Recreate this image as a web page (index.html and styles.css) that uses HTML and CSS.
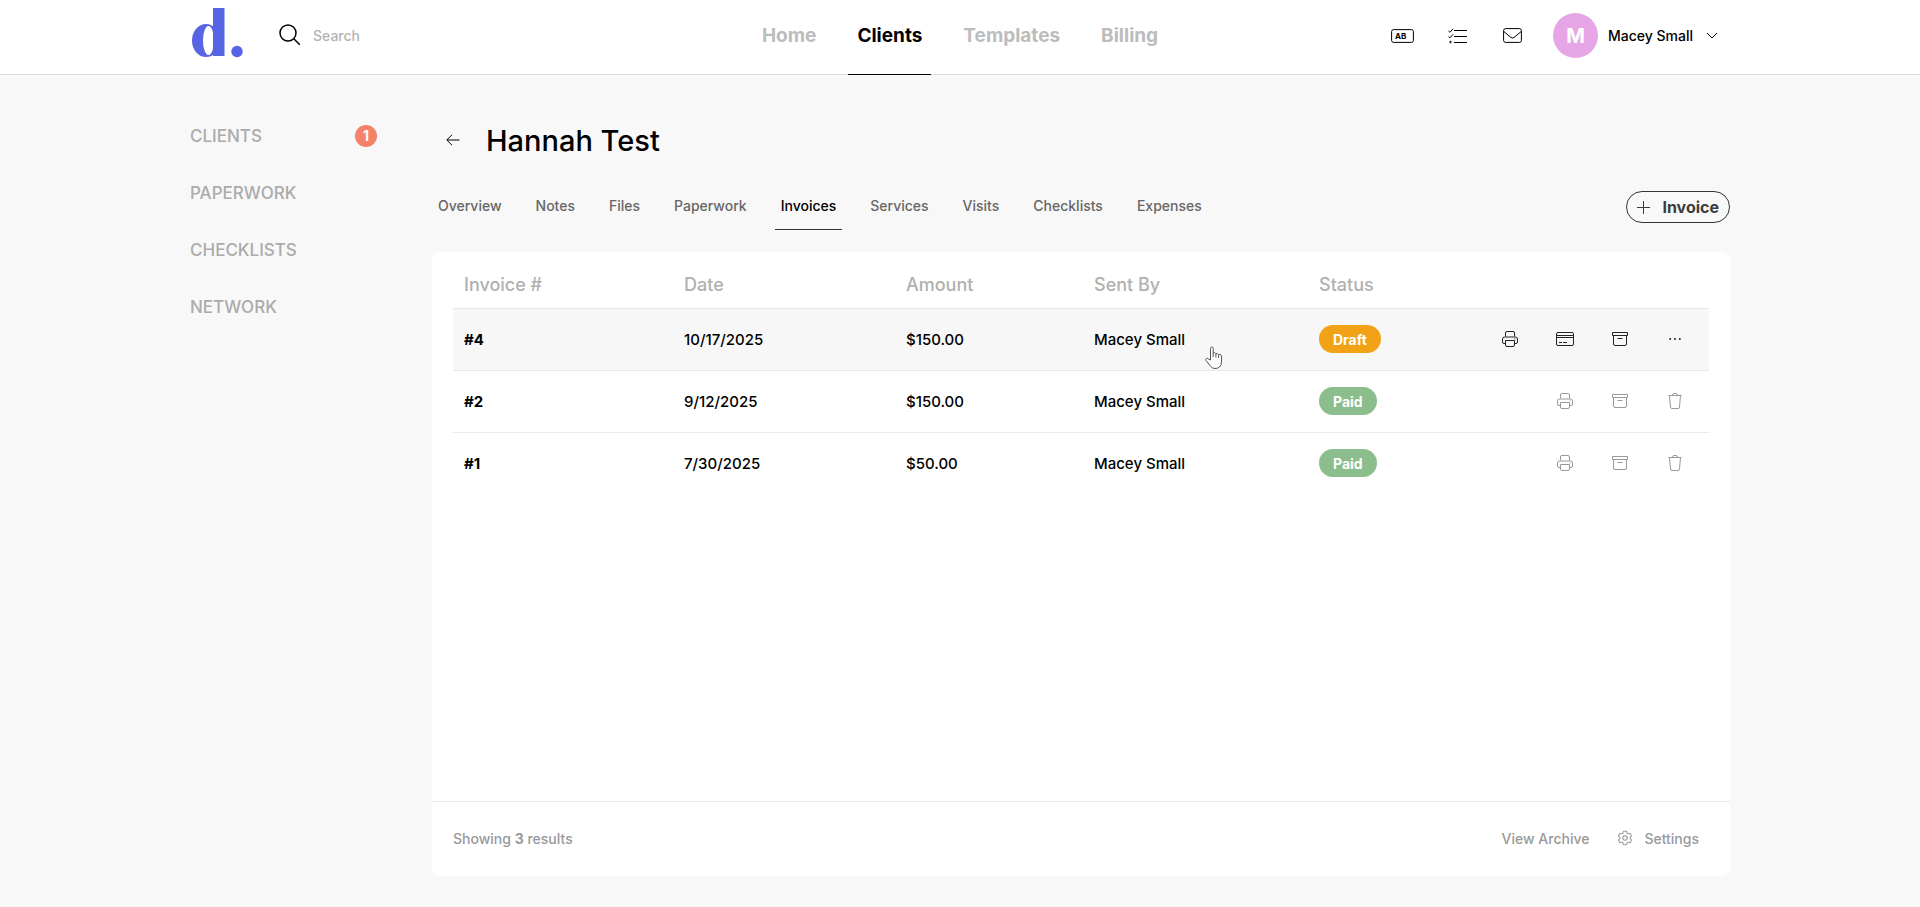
FILE: index.html
```html
<!DOCTYPE html>
<html lang="en">
<head>
    <meta charset="UTF-8">
    <meta name="viewport" content="width=device-width, initial-scale=1.0">
    <title>Hannah Test - Invoices</title>
    <link rel="stylesheet" href="styles.css">
</head>
<body>
    <!-- shared icons -->
    <svg class="sprite" aria-hidden="true">
        <symbol id="printer" viewBox="0 0 16 16">
            <path d="M3.5 5.5V2a1.5 1.5 0 0 1 1.5-1.5h6A1.5 1.5 0 0 1 12.5 2v3.5"/>
            <path d="M3.5 12.5H2A1.5 1.5 0 0 1 .5 11V8A2 2 0 0 1 2.5 6h11a2 2 0 0 1 2 2v3a1.5 1.5 0 0 1-1.5 1.5h-1.5"/>
            <path d="M3.5 9.5h9V14a1.5 1.5 0 0 1-1.5 1.5H5A1.5 1.5 0 0 1 3.5 14zM12.5 8h1"/>
        </symbol>
        <symbol id="archive" viewBox="0 0 16 16">
            <path d="M.5 1.5h15v3H.5zM1.5 4.5V13A1.5 1.5 0 0 0 3 14.5h10a1.5 1.5 0 0 0 1.5-1.5V4.5M5.5 7.5h5"/>
        </symbol>
        <symbol id="trash" viewBox="0 0 14 16">
            <path d="M.5 2.500h13M4.500 2.500Q4.500.5 6 .5h2q1.500 0 1.500 2M1.500 2.500l1 11.500A1.500 1.500 0 0 0 4 15.500h6a1.500 1.500 0 0 0 1.500-1.500l1-11.500"/>
        </symbol>
    </svg>

    <header class="topbar">
        <div class="topbar-inner">
            <div class="topbar-left">
                <a href="#" class="logo" aria-label="Home page">
                    <svg width="52" height="50" viewBox="0 0 52 50">
                        <ellipse class="logo-fill" cx="15" cy="32.5" rx="14" ry="16.5"/>
                        <ellipse class="logo-hole" cx="17.5" cy="32.5" rx="5.5" ry="14.5"/>
                        <rect class="logo-fill" x="22" y="0" width="11.5" height="48"/>
                        <circle class="logo-fill" cx="46" cy="43.5" r="5.7"/>
                    </svg>
                </a>
                <label class="search">
                    <svg class="icon" width="22" height="22" viewBox="0 0 22 22" stroke-width="1.5"><circle cx="9" cy="9" r="8"/><path d="M14.8 14.8l6 6"/></svg>
                    <input type="search" placeholder="Search" aria-label="Search">
                </label>
            </div>
            <nav class="main-nav">
                <a href="#">Home</a>
                <a href="#" class="active">Clients</a>
                <a href="#">Templates</a>
                <a href="#">Billing</a>
            </nav>
            <div class="topbar-right">
                <button class="icon-btn" aria-label="Text snippets">
                    <svg class="icon" width="23" height="14" viewBox="0 0 23 14"><rect x=".6" y=".6" width="21.8" height="12.8" rx="2"/><text x="4" y="10">AB</text></svg>
                </button>
                <button class="icon-btn" aria-label="Tasks">
                    <svg class="icon" width="19" height="16" viewBox="0 0 19 16"><path d="M6 2.5h13M6 8.5h13M6 14.500h13M.5 3l1.500 1.300L5 .8M.5 8.500L2 9.800l3-3.500"/><circle cx="2.5" cy="14" r=".8"/></svg>
                </button>
                <button class="icon-btn" aria-label="Messages">
                    <svg class="icon" width="19" height="15" viewBox="0 0 19 15"><rect x=".6" y=".6" width="17.8" height="13.8" rx="2"/><path d="M.8 3.5l7.2 6q1.5 1 3 0l7.200-6"/></svg>
                </button>
                <button class="user">
                    <span class="avatar">M</span>
                    <span>Macey Small</span>
                    <svg class="icon" width="12" height="8" viewBox="0 0 12 8"><path d="M1 1l5 5 5-5"/></svg>
                </button>
            </div>
        </div>
    </header>

    <div class="page">
        <nav class="sidebar">
            <a href="#">CLIENTS <span class="badge">1</span></a>
            <a href="#">PAPERWORK</a>
            <a href="#">CHECKLISTS</a>
            <a href="#">NETWORK</a>
        </nav>

        <main class="content">
            <div class="title">
                <a href="#" class="back" aria-label="Back">
                    <svg class="icon" width="14" height="12" viewBox="0 0 14 12"><path d="M13.5 6H1M6 .8L.8 6 6 11.2"/></svg>
                </a>
                <h1>Hannah Test</h1>
            </div>
            <div class="tab-row">
                <nav class="tabs">
                    <a href="#">Overview</a>
                    <a href="#">Notes</a>
                    <a href="#">Files</a>
                    <a href="#">Paperwork</a>
                    <a href="#" class="active">Invoices</a>
                    <a href="#">Services</a>
                    <a href="#">Visits</a>
                    <a href="#">Checklists</a>
                    <a href="#">Expenses</a>
                </nav>
                <button class="add-btn">
                    <svg class="icon" width="13" height="13" viewBox="0 0 13 13"><path d="M6.5 0v13M0 6.5h13"/></svg>
                    Invoice
                </button>
            </div>

            <section class="card">
                <table class="invoices">
                    <thead>
                        <tr>
                            <th class="col-number">Invoice #</th>
                            <th class="col-date">Date</th>
                            <th class="col-amount">Amount</th>
                            <th class="col-sender">Sent By</th>
                            <th class="col-status">Status</th>
                            <th aria-label="Actions"></th>
                        </tr>
                    </thead>
                    <tbody>
                        <tr class="hovered">
                            <td class="number">#4</td>
                            <td>10/17/2025</td>
                            <td>$150.00</td>
                            <td class="sender">Macey Small
                                <svg class="pointer" width="18" height="24" viewBox="0 0 18 24"><path d="M5.5 14V2.5q0-1.500 1.300-1.500t1.400 1.500V7q2-1 2.600.7 2-.8 2.700.8 2.700-.7 3 1.700v5q0 4-2 5.800-1.500 1.500-4.500 1.500-3 0-4.600-2.500L1 14.500q-.7-1.700.7-2.200 1.200-.3 2.100.9zM8.200 7v4M10.900 8v3.500M13.600 9v3"/></svg>
                            </td>
                            <td><span class="pill draft">Draft</span></td>
                            <td>
                                <div class="actions">
                                    <button aria-label="Print"><svg class="icon" width="16" height="16"><use href="#printer"/></svg></button>
                                    <button aria-label="Payment"><svg class="icon" width="18" height="14" viewBox="0 0 18 14"><rect x=".5" y=".5" width="17" height="13" rx="1.5"/><path d="M.5 3.5h17M.5 5.5h17M3 10.500h3M7 10.500h4"/></svg></button>
                                    <button aria-label="Archive"><svg class="icon" width="16" height="16"><use href="#archive"/></svg></button>
                                    <button aria-label="More"><svg class="dots" width="12" height="4" viewBox="0 0 12 4"><circle cx="1.2" cy="2" r="1"/><circle cx="6" cy="2" r="1"/><circle cx="10.8" cy="2" r="1"/></svg></button>
                                </div>
                            </td>
                        </tr>
                        <tr>
                            <td class="number">#2</td>
                            <td>9/12/2025</td>
                            <td>$150.00</td>
                            <td>Macey Small</td>
                            <td><span class="pill paid">Paid</span></td>
                            <td>
                                <div class="actions">
                                    <button aria-label="Print"><svg class="icon" width="16" height="16"><use href="#printer"/></svg></button>
                                    <button aria-label="Archive"><svg class="icon" width="16" height="16"><use href="#archive"/></svg></button>
                                    <button aria-label="Delete"><svg class="icon" width="14" height="16"><use href="#trash"/></svg></button>
                                </div>
                            </td>
                        </tr>
                        <tr>
                            <td class="number">#1</td>
                            <td>7/30/2025</td>
                            <td>$50.00</td>
                            <td>Macey Small</td>
                            <td><span class="pill paid">Paid</span></td>
                            <td>
                                <div class="actions">
                                    <button aria-label="Print"><svg class="icon" width="16" height="16"><use href="#printer"/></svg></button>
                                    <button aria-label="Archive"><svg class="icon" width="16" height="16"><use href="#archive"/></svg></button>
                                    <button aria-label="Delete"><svg class="icon" width="14" height="16"><use href="#trash"/></svg></button>
                                </div>
                            </td>
                        </tr>
                    </tbody>
                </table>
                <footer class="card-footer">
                    <span>Showing <b>3</b> results</span>
                    <div class="footer-links">
                        <a href="#">View Archive</a>
                        <a href="#">
                            <svg class="icon" width="18" height="18" viewBox="0 0 24 24" stroke-width="1.4"><path d="M9.594 3.94c.09-.542.56-.94 1.11-.94h2.593c.55 0 1.02.398 1.11.94l.213 1.281c.063.374.313.686.645.87.074.04.147.083.22.127.325.196.72.257 1.075.124l1.217-.456a1.125 1.125 0 0 1 1.37.49l1.296 2.247a1.125 1.125 0 0 1-.26 1.431l-1.003.827c-.293.241-.438.613-.43.992a7.723 7.723 0 0 1 0 .255c-.008.378.137.75.43.991l1.004.827c.424.35.534.955.26 1.43l-1.298 2.247a1.125 1.125 0 0 1-1.369.491l-1.217-.456c-.355-.133-.75-.072-1.076.124a6.47 6.47 0 0 1-.22.128c-.331.183-.581.495-.644.869l-.213 1.281c-.09.543-.56.94-1.11.94h-2.594c-.55 0-1.019-.398-1.11-.94l-.213-1.281c-.062-.374-.312-.686-.644-.87a6.52 6.52 0 0 1-.22-.127c-.325-.196-.72-.257-1.076-.124l-1.217.456a1.125 1.125 0 0 1-1.369-.49l-1.297-2.247a1.125 1.125 0 0 1 .26-1.431l1.004-.827c.292-.24.437-.613.43-.991a6.932 6.932 0 0 1 0-.255c.007-.38-.138-.751-.43-.992l-1.004-.827a1.125 1.125 0 0 1-.26-1.43l1.297-2.247a1.125 1.125 0 0 1 1.37-.491l1.216.456c.356.133.751.072 1.076-.124.072-.044.146-.086.22-.128.332-.183.582-.495.644-.869l.214-1.28Z"/><circle cx="12" cy="12" r="3"/></svg>
                            Settings
                        </a>
                    </div>
                </footer>
            </section>
        </main>
    </div>
</body>
</html>
```
FILE: styles.css
```css
*{
    box-sizing: border-box;
}
body{
    margin: 0;
    min-height: 100vh;
    display: flex;
    flex-direction: column;
    background-color: #f8f8f8;
    color: #000;
    font-family: Inter, "Liberation Sans", sans-serif;
    font-size: 14px;
    font-weight: 500;
}
a{
    color: inherit;
    text-decoration: none;
}
button{
    padding: 0;
    border: 0;
    background: none;
    color: inherit;
    font: inherit;
    cursor: pointer;
}
svg{
    display: block;
    flex-shrink: 0;
}
.sprite{
    display: none;
}
.icon{
    fill: none;
    stroke: currentColor;
}
.topbar{
    padding: 0 190px;
    background-color: #fff;
    border-bottom: 1px solid #dcdcdc;
}
.topbar-inner{
    height: 74px;
    display: grid;
    grid-template-columns: 1fr auto 1fr;
}
.topbar-left, .topbar-right{
    display: flex;
    align-items: center;
}
.topbar-left{
    gap: 36px;
    padding-bottom: 9px;
}
.topbar-right{
    justify-content: flex-end;
    padding-right: 12px;
    padding-bottom: 4px;
}
.logo{
    margin-left: 1px;
}
.logo-fill{
    fill: #5764e3;
}
.logo-hole{
    fill: #fff;
}
.search{
    display: flex;
    align-items: center;
    gap: 12px;
    padding-top: 4px;
}
.search input{
    width: 160px;
    padding: 0;
    border: 0;
    outline: none;
    background: none;
    font: inherit;
}
.search input::placeholder{
    color: #b4b4b4;
}
.main-nav{
    display: flex;
    gap: 23px;
    font-size: 19px;
    font-weight: 700;
    color: #bcbcbc;
}
.main-nav a{
    height: 75px;
    padding: 0 9px 4px;
    display: flex;
    align-items: center;
    border-bottom: 1px solid transparent;
}
.main-nav .active{
    color: #000;
    border-color: #000;
}
.icon-btn{
    width: 55px;
    height: 32px;
    display: flex;
    align-items: center;
    justify-content: center;
}
.icon-btn text{
    fill: currentColor;
    stroke: none;
    font-size: 8px;
    font-weight: 700;
}
.user{
    margin-left: 13px;
    display: flex;
    align-items: center;
    gap: 10px;
}
.user .icon{
    margin-left: 3px;
}
.avatar{
    width: 45px;
    height: 45px;
    border-radius: 50%;
    display: flex;
    align-items: center;
    justify-content: center;
    background-color: #e6a6e6;
    color: #fff;
    font-size: 20px;
    font-weight: 700;
}
.page{
    flex: 1;
    display: grid;
    grid-template-columns: 187px 1fr;
    gap: 55px;
    padding: 42px 190px 31px;
}
.sidebar{
    display: flex;
    flex-direction: column;
    gap: 20px;
    font-size: 17px;
    color: #ababab;
}
.sidebar a{
    height: 37px;
    display: flex;
    align-items: center;
    justify-content: space-between;
}
.badge{
    width: 22px;
    height: 22px;
    border-radius: 50%;
    display: flex;
    align-items: center;
    justify-content: center;
    background-color: #f3836b;
    color: #fff;
    font-size: 14px;
    font-weight: 700;
}
.content{
    display: flex;
    flex-direction: column;
}
.title{
    height: 46px;
    padding-left: 14px;
    display: flex;
    align-items: center;
    gap: 26px;
}
h1{
    margin: 0;
    font-size: 29px;
    font-weight: 500;
}
.tab-row{
    height: 67px;
    margin-bottom: 22px;
    display: flex;
    align-items: flex-end;
    justify-content: space-between;
}
.tabs{
    display: flex;
    gap: 22px;
    color: #666;
}
.tabs a{
    height: 47px;
    padding: 0 6px 2px;
    display: flex;
    align-items: center;
    border-bottom: 1px solid transparent;
}
.tabs .active{
    color: #000;
    border-color: #333;
}
.add-btn{
    height: 32px;
    margin-bottom: 7px;
    padding: 0 10px;
    display: flex;
    align-items: center;
    gap: 12px;
    border: 1px solid #333;
    border-radius: 16px;
    color: #3c3c3c;
    font-size: 16px;
    font-weight: 700;
}
.card{
    flex: 1;
    display: flex;
    flex-direction: column;
    justify-content: space-between;
    background-color: #fff;
    border-radius: 8px;
}
.invoices{
    width: calc(100% - 42px);
    margin: 8px 21px;
    border-collapse: collapse;
    table-layout: fixed;
}
.invoices th, .invoices td{
    padding: 0 11px;
    border-bottom: 1px solid #e9e9e9;
    text-align: left;
}
.invoices th{
    height: 48px;
    padding-top: 2px;
    color: #b0b0b0;
    font-size: 18px;
    font-weight: 500;
}
.invoices td{
    height: 62px;
    font-size: 15px;
}
.invoices tr:last-child td{
    border-bottom: 0;
}
.col-number{
    width: 220px;
}
.col-date{
    width: 222px;
}
.col-amount{
    width: 188px;
}
.col-sender{
    width: 225px;
}
.col-status{
    width: 160px;
}
.hovered{
    background-color: #f7f7f7;
}
.invoices .number{
    font-weight: 700;
}
.sender{
    position: relative;
}
.pointer{
    position: absolute;
    left: 122px;
    top: 37px;
    fill: #fff;
    stroke: #555;
}
.pill{
    height: 28px;
    padding: 0 14px;
    border-radius: 14px;
    display: inline-flex;
    align-items: center;
    vertical-align: middle;
    color: #fff;
    font-size: 14px;
    font-weight: 700;
}
.draft{
    background-color: #f2a216;
}
.paid{
    background-color: #8cbd8c;
}
.actions{
    display: flex;
    justify-content: flex-end;
    gap: 31px;
    padding-right: 11px;
    color: #999;
}
.hovered .actions{
    color: #222;
}
.actions button{
    width: 24px;
    height: 24px;
    display: flex;
    align-items: center;
    justify-content: center;
}
.dots{
    fill: currentColor;
}
.card-footer{
    height: 75px;
    padding: 0 31px 2px 21px;
    display: flex;
    align-items: center;
    justify-content: space-between;
    border-top: 1px solid #e9e9e9;
    color: #999;
}
.footer-links, .footer-links a{
    display: flex;
    align-items: center;
}
.footer-links{
    gap: 27px;
}
.footer-links a{
    gap: 10px;
}
```
